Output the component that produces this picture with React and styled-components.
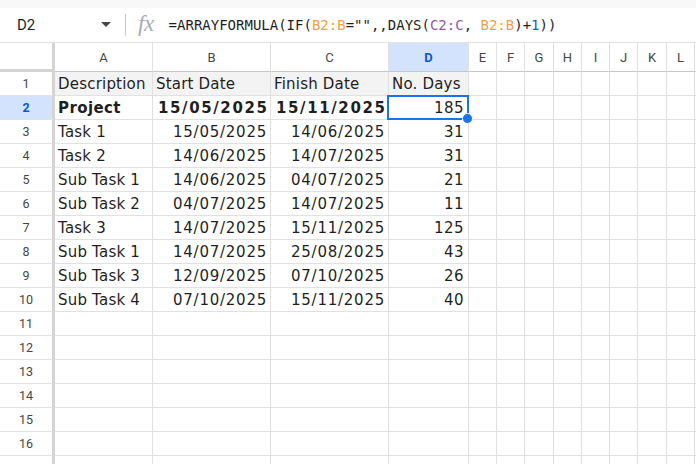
import React from "react";
import styled, { createGlobalStyle } from "styled-components";

const GlobalStyle = createGlobalStyle`
  body {
    margin: 0;
    background: #ffffff;
    overflow: hidden;
  }
`;

const Page = styled.div`
  width: 696px;
  height: 464px;
  overflow: hidden;
  background: #ffffff;
  font-family: Roboto, "Liberation Sans", sans-serif;
`;

const TopBand = styled.div`
  height: 8px;
  background: #f8f8f8;
`;

const FormulaBar = styled.div`
  display: flex;
  align-items: center;
  height: 34px;
  border-bottom: 1px solid #e1e3e1;
`;

const NameBox = styled.div`
  display: flex;
  align-items: center;
  justify-content: space-between;
  width: 94px;
  padding: 0 14px 0 17px;
  font-size: 15px;
  color: #1f1f1f;
`;

const Caret = styled.span`
  width: 0;
  height: 0;
  border-left: 5px solid transparent;
  border-right: 5px solid transparent;
  border-top: 5px solid #444746;
  margin-top: -2px;
`;

const Divider = styled.span`
  width: 1px;
  height: 22px;
  background: #c7c7c7;
`;

const FxIcon = styled.span`
  font-family: "Liberation Serif", serif;
  font-style: italic;
  font-size: 23px;
  color: #a8acb0;
  margin: -3px 15px 0 12px;
  letter-spacing: -0.5px;
`;

const Formula = styled.div`
  font-family: "DejaVu Sans Mono", "Liberation Mono", monospace;
  font-size: 14px;
  color: #1f1f1f;
  white-space: pre;
`;

const Ref = styled.span`
  color: ${(p) => p.$color};
`;

const Grid = styled.div`
  display: grid;
  grid-template-columns: 55px 98px 118px 118px 80px 28px 28px 29px 28px 28px 28px 29px 28px 1fr;
  grid-auto-rows: 24px;
  grid-template-rows: 29px;
`;

const Corner = styled.div`
  border-right: 3px solid #d4d4d4;
  border-bottom: 3px solid #d4d4d4;
`;

const ColHead = styled.div`
  display: flex;
  align-items: center;
  justify-content: center;
  padding-top: 1px;
  border-right: 1px solid #e1e1e1;
  border-bottom: 1px solid #c4c7c5;
  font-size: 13px;
  color: ${(p) => (p.$active ? "#0b57d0" : "#444746")};
  font-weight: ${(p) => (p.$active ? 700 : 400)};
  background: ${(p) => (p.$active ? "#d3e3fd" : "#ffffff")};
`;

const RowHead = styled.div`
  display: flex;
  align-items: center;
  justify-content: center;
  border-right: 3px solid #d4d4d4;
  border-bottom: 1px solid #e1e1e1;
  font-size: 12.5px;
  color: ${(p) => (p.$active ? "#0b57d0" : "#444746")};
  font-weight: ${(p) => (p.$active ? 700 : 400)};
  background: ${(p) => (p.$active ? "#d3e3fd" : "#ffffff")};
`;

const spacing = {
  text: "0.2px",
  boldText: "0.4px",
  date: "0.75px",
  boldDate: "1.6px",
  number: "0.45px",
};

const Cell = styled.div`
  position: relative;
  display: flex;
  align-items: flex-end;
  justify-content: ${(p) => (p.$right ? "flex-end" : "flex-start")};
  padding: 0 ${(p) => p.$padRight || "3px"} 2px 3px;
  line-height: 17px;
  border-right: 1px solid #e1e1e1;
  border-bottom: 1px solid #e1e1e1;
  font-family: "DejaVu Sans", Verdana, sans-serif;
  font-size: 15px;
  color: #1f1f1f;
  white-space: nowrap;
  letter-spacing: ${(p) => spacing[p.$kind] || "0"};
  background: ${(p) => (p.$shade ? "#f3f3f3" : "#ffffff")};
  font-weight: ${(p) => (p.$bold ? 700 : 400)};
`;

const Selection = styled.div`
  position: absolute;
  top: -1px;
  left: -2px;
  right: -1px;
  bottom: -1px;
  border: 2px solid #1a73e8;
  pointer-events: none;
`;

const FillHandle = styled.span`
  position: absolute;
  right: -6px;
  bottom: -6px;
  width: 9px;
  height: 9px;
  border-radius: 50%;
  background: #1a73e8;
  border: 1px solid #ffffff;
  z-index: 2;
`;

const columns = ["A", "B", "C", "D", "E", "F", "G", "H", "I", "J", "K", "L", ""];

const rows = [
  ["Description", "Start Date", "Finish Date", "No. Days"],
  ["Project", "15/05/2025", "15/11/2025", "185"],
  ["Task 1", "15/05/2025", "14/06/2025", "31"],
  ["Task 2", "14/06/2025", "14/07/2025", "31"],
  ["Sub Task 1", "14/06/2025", "04/07/2025", "21"],
  ["Sub Task 2", "04/07/2025", "14/07/2025", "11"],
  ["Task 3", "14/07/2025", "15/11/2025", "125"],
  ["Sub Task 1", "14/07/2025", "25/08/2025", "43"],
  ["Sub Task 3", "12/09/2025", "07/10/2025", "26"],
  ["Sub Task 4", "07/10/2025", "15/11/2025", "40"],
];

// row 17 only peeks in under the bottom edge, its label is below the fold
const TOTAL_ROWS = 17;
const VISIBLE_LABELS = 16;

const kindOf = (r, c) => {
  if (r === 1 || c === 0) return r === 2 ? "boldText" : "text";
  if (c === 3) return "number";
  return r === 2 ? "boldDate" : "date";
};

const App = () => {
  const body = [];
  for (let r = 1; r <= TOTAL_ROWS; r++) {
    const data = rows[r - 1] || [];
    const isHeader = r === 1;
    body.push(
      <RowHead key={`h${r}`} $active={r === 2}>
        {r <= VISIBLE_LABELS ? r : ""}
      </RowHead>
    );
    columns.forEach((col, c) => {
      const value = data[c] || "";
      const kind = kindOf(r, c);
      const selected = r === 2 && col === "D";
      let padRight;
      if (!isHeader && c === 3) padRight = "4px";
      if (kind === "boldDate") padRight = "1.5px";
      body.push(
        <Cell
          key={`${col || "M"}${r}`}
          $right={!isHeader && c > 0}
          $shade={isHeader && c < 4}
          $bold={r === 2 && c < 3}
          $kind={value ? kind : ""}
          $padRight={padRight}
        >
          {value}
          {selected && (
            <Selection>
              <FillHandle />
            </Selection>
          )}
        </Cell>
      );
    });
  }

  return (
    <Page>
      <GlobalStyle />
      <TopBand />
      <FormulaBar>
        <NameBox>
          D2
          <Caret />
        </NameBox>
        <Divider />
        <FxIcon>fx</FxIcon>
        <Formula>
          =ARRAYFORMULA(IF(<Ref $color="#f0a04b">B2:B</Ref>="",,DAYS(
          <Ref $color="#8e5aa8">C2:C</Ref>, <Ref $color="#f0a04b">B2:B</Ref>)+
          <Ref $color="#1a5fb4">1</Ref>))
        </Formula>
      </FormulaBar>
      <Grid>
        <Corner />
        {columns.map((col, i) => (
          <ColHead key={col || `x${i}`} $active={col === "D"}>
            {col}
          </ColHead>
        ))}
        {body}
      </Grid>
    </Page>
  );
};

export default App;
